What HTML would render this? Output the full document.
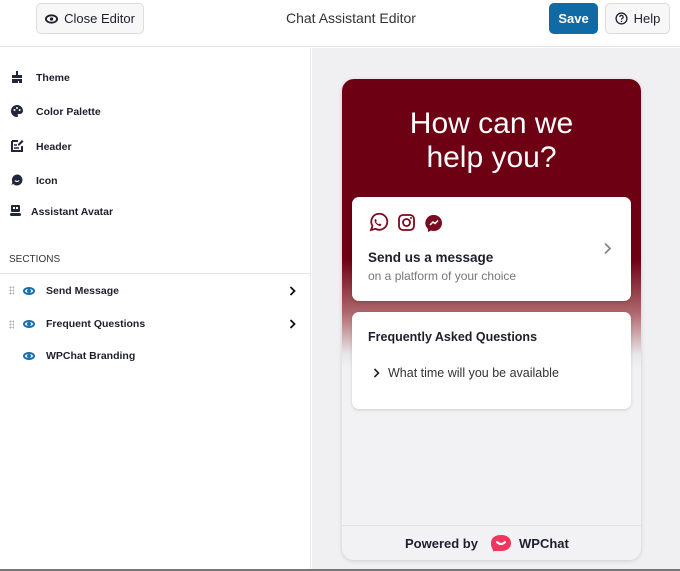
<!DOCTYPE html>
<html><head><style>
*{box-sizing:border-box;margin:0;padding:0}
body{width:680px;height:571px;overflow:hidden;background:#fff;font-family:"Liberation Sans",sans-serif;color:#1e1e2e;position:relative}
.top{position:absolute;left:0;top:0;width:680px;height:47px;border-bottom:1px solid #e4e4e8;background:#fff}
.btn{position:absolute;top:3px;height:31px;border:1px solid #dcdce0;border-radius:5px;background:#f7f7f8;font-size:13px;display:flex;align-items:center;justify-content:center;gap:6px;color:#1e1e2e}
.title{position:absolute;left:286px;top:10px;font-size:14px;color:#333}
.side{position:absolute;left:0;top:48px;width:311px;height:523px;background:#fff;border-right:1px solid #e8e8ea}
.it{position:absolute;font-size:10.5px;font-weight:bold;color:#1e1e2e}
.ic{position:absolute}
.right{position:absolute;left:312px;top:48px;width:368px;height:523px;background:#f0f0f2}
.panel{position:absolute;left:342px;top:79px;width:299px;height:481px;border-radius:12px;overflow:hidden;background:linear-gradient(#6e0014 0px,#6e0014 180px,#b06a70 235px,#e8e6e8 275px,#f2f2f4 290px);box-shadow:0 1px 4px rgba(0,0,0,.15)}
.card{position:absolute;left:10px;width:279px;background:#fff;border-radius:7px;box-shadow:0 1px 3px rgba(0,0,0,.15)}
.eye{position:absolute;width:12px;height:8px;border:2px solid #1a6fa8;border-radius:50%}
.eye:after{content:"";position:absolute;left:2px;top:0px;width:4px;height:4px;background:#1a6fa8;border-radius:50%}
.dots{position:absolute;left:9px;width:5px;height:9px;background-image:radial-gradient(#aaa 0.8px,transparent 1px);background-size:3px 3px}
.chev{position:absolute}
</style></head><body>
<div class="top">
 <div class="btn" style="left:36px;width:108px"><svg width="13" height="10" viewBox="0 0 14 10"><ellipse cx="7" cy="5" rx="6" ry="4" fill="none" stroke="#1e1e2e" stroke-width="2"/><circle cx="7" cy="5" r="1.8" fill="#1e1e2e"/></svg>Close Editor</div>
 <div class="title">Chat Assistant Editor</div>
 <div class="btn" style="left:549px;width:49px;background:#0f6aa5;border-color:#0f6aa5;color:#fff;font-weight:bold">Save</div>
 <div class="btn" style="left:605px;width:65px"><svg width="13" height="13" viewBox="0 0 12 12"><circle cx="6" cy="6" r="5" fill="none" stroke="#1e1e2e" stroke-width="1.2"/><path d="M4.5 4.6a1.5 1.5 0 1 1 2 1.4c-.4.2-.5.5-.5 1" fill="none" stroke="#1e1e2e" stroke-width="1.1"/><circle cx="6" cy="8.7" r=".7" fill="#1e1e2e"/></svg>Help</div>
</div>
<div class="side">
 <svg class="ic" style="left:11px;top:23px" width="12" height="12" viewBox="0 0 12 12"><path d="M5 0h2v4h4v3H1V4h4zM1 8h10v4H8v-2H7v2H1z" fill="#22263a"/></svg><div class="it" style="left:36px;top:24px">Theme</div>
 <svg class="ic" style="left:11px;top:57px" width="12" height="12" viewBox="0 0 12 12"><path d="M6 0a6 6 0 0 0 0 12c1 0 1.3-.8.8-1.5-.5-.8 0-1.5.8-1.5H9a3 3 0 0 0 3-3A6 6 0 0 0 6 0z" fill="#22263a"/><circle cx="3.5" cy="5" r="1" fill="#fff"/><circle cx="6" cy="3" r="1" fill="#fff"/><circle cx="8.7" cy="5" r="1" fill="#fff"/></svg><div class="it" style="left:36px;top:58px">Color Palette</div>
 <svg class="ic" style="left:11px;top:91px" width="13" height="13" viewBox="0 0 13 13"><path d="M1 2h6M1 2v10h10V7" fill="none" stroke="#22263a" stroke-width="2"/><path d="M3 6h3M3 9h5" stroke="#22263a" stroke-width="1.5"/><path d="M11 1l1.5 1.5-4 4H7V5z" fill="#22263a"/></svg><div class="it" style="left:36px;top:93px">Header</div>
 <svg class="ic" style="left:11px;top:126px" width="12" height="12" viewBox="0 0 12 12"><path d="M6 .5a5.5 5.5 0 1 1-4 9.3L.5 11.5 1.3 8A5.5 5.5 0 0 1 6 .5z" fill="#22263a"/><path d="M3.8 6.5q2.2 2 4.4 0" stroke="#fff" stroke-width="1.1" fill="none"/></svg><div class="it" style="left:36px;top:127px">Icon</div>
 <svg class="ic" style="left:10px;top:157px" width="11" height="12" viewBox="0 0 11 12"><rect x="1" y="0" width="9" height="7" rx="1" fill="#22263a"/><rect x="3" y="2" width="2" height="2" fill="#fff"/><rect x="6" y="2" width="2" height="2" fill="#fff"/><rect x="0" y="8" width="11" height="3" rx="1.5" fill="#22263a"/></svg><div class="it" style="left:31px;top:158px">Assistant Avatar</div>
 <div style="position:absolute;left:9px;top:206px;font-size:10px;color:#333">SECTIONS</div>
 <div style="position:absolute;left:0;top:225px;width:311px;border-top:1px solid #e4e4e8"></div>
 <div class="dots" style="top:238px"></div><div class="eye" style="left:23px;top:239px"></div><div class="it" style="left:46px;top:237px">Send Message</div><svg class="chev" style="left:289px;top:238px" width="7" height="10" viewBox="0 0 7 10"><path d="M1.5 1l4 4-4 4" fill="none" stroke="#111" stroke-width="1.8"/></svg>
 <div class="dots" style="top:272px"></div><div class="eye" style="left:23px;top:272px"></div><div class="it" style="left:46px;top:270px">Frequent Questions</div><svg class="chev" style="left:289px;top:271px" width="7" height="10" viewBox="0 0 7 10"><path d="M1.5 1l4 4-4 4" fill="none" stroke="#111" stroke-width="1.8"/></svg>
 <div class="eye" style="left:23px;top:304px"></div><div class="it" style="left:46px;top:302px">WPChat Branding</div>
</div>
<div class="right"></div>
<div class="panel">
 <div style="position:absolute;left:0;top:28px;width:299px;text-align:center;color:#fff;font-size:30px;line-height:34px">How can we<br>help you?</div>
 <div class="card" style="top:118px;height:104px">
  <svg style="position:absolute;left:16px;top:16px" width="80" height="20" viewBox="0 0 80 20">
   <g fill="none" stroke="#7a0a1e" stroke-width="1.8"><path d="M3 17 L4.5 13 A8 8 0 1 1 7.5 15.8 Z"/><rect x="31" y="2" width="15" height="15" rx="4"/><circle cx="38.5" cy="9.5" r="3.5"/></g>
   <circle cx="43" cy="5" r="1" fill="#7a0a1e"/>
   <path d="M6.5 7c0 3 3 6 6 6l1-1.5-2-1-1 .8c-1-.5-2-1.5-2.5-2.5l.8-1-1-2z" fill="#7a0a1e"/>
   <path d="M66 2a8 8 0 0 1 0 16c-1 0-2-.2-3-.5L60 19v-3a8 8 0 0 1 6-14z" fill="#7a0a1e"/>
   <path d="M62 12l3-3 2 1.5 3-3-3 3-2-1.5z" stroke="#fff" stroke-width="1.5" fill="none"/>
  </svg>
  <div style="position:absolute;left:16px;top:53px;font-size:13.5px;font-weight:bold;color:#1e1e2e">Send us a message</div>
  <div style="position:absolute;left:16px;top:72px;font-size:12px;color:#777">on a platform of your choice</div>
  <svg style="position:absolute;left:251px;top:45px" width="9" height="13" viewBox="0 0 9 13"><path d="M2 1.5l5 5-5 5" fill="none" stroke="#888" stroke-width="1.8"/></svg>
 </div>
 <div class="card" style="top:233px;height:97px">
  <div style="position:absolute;left:16px;top:18px;font-size:12.5px;font-weight:bold;color:#1e1e2e">Frequently Asked Questions</div>
  <svg style="position:absolute;left:21px;top:56px" width="7" height="10" viewBox="0 0 7 10"><path d="M1.5 1l4 4-4 4" fill="none" stroke="#222" stroke-width="1.6"/></svg>
  <div style="position:absolute;left:36px;top:54px;font-size:12.5px;color:#333">What time will you be available</div>
 </div>
 <div style="position:absolute;left:0;top:446px;width:299px;border-top:1px solid #e2e2e4"></div>
 <div style="position:absolute;left:63px;top:457px;font-size:13px;font-weight:bold;color:#1e1e2e">Powered by</div>
 <svg style="position:absolute;left:148px;top:455px" width="22" height="19" viewBox="0 0 22 19"><path d="M11 1c6 0 10 3 10 8s-4 8-10 8H4v1.5L2 14C1 12 1 11 1 9 1 4 5 1 11 1z" fill="#f0365e"/><path d="M7 8q4 4 8 0" stroke="#fff" stroke-width="2" fill="none" stroke-linecap="round"/></svg>
 <div style="position:absolute;left:177px;top:457px;font-size:13px;font-weight:bold;color:#1e1e2e">WPChat</div>
</div>
<div style="position:absolute;left:0;top:569px;width:680px;height:2px;background:#777"></div>
</body></html>
